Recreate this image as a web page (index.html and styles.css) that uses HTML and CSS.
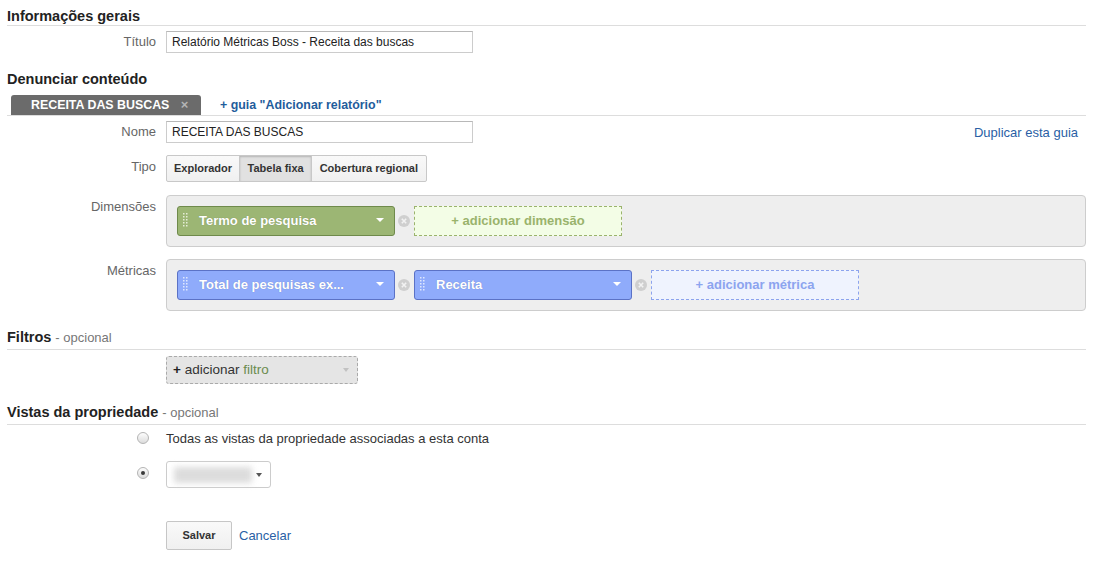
FILE: index.html
```html
<!DOCTYPE html>
<html lang="pt-BR">
<head>
    <meta charset="UTF-8">
    <meta name="viewport" content="width=device-width, initial-scale=1.0">
    <title>Editar relatório personalizado</title>
    <link rel="stylesheet" href="styles.css">
</head>
<body>
    <div class="page">
        <h2 class="sec-title">Informações gerais</h2>
        <div class="row row-title">
            <label class="row-label">Título</label>
            <div class="row-field">
                <input class="text-input" type="text" value="Relatório Métricas Boss - Receita das buscas">
            </div>
        </div>

        <h2 class="sec-title plain">Denunciar conteúdo</h2>
        <div class="tab-bar">
            <div class="tab">RECEITA DAS BUSCAS <span class="tab-close">×</span></div>
            <a class="tab-add" href="#">+ guia "Adicionar relatório"</a>
        </div>

        <div class="row row-name">
            <label class="row-label">Nome</label>
            <div class="row-field spread">
                <input class="text-input" type="text" value="RECEITA DAS BUSCAS">
                <a class="link dup-link" href="#">Duplicar esta guia</a>
            </div>
        </div>

        <div class="row row-type">
            <label class="row-label pad">Tipo</label>
            <div class="row-field">
                <div class="btn-group">
                    <span class="seg">Explorador</span>
                    <span class="seg selected">Tabela fixa</span>
                    <span class="seg">Cobertura regional</span>
                </div>
            </div>
        </div>

        <div class="row row-dims">
            <label class="row-label pad">Dimensões</label>
            <div class="pill-box">
                <div class="chip green">
                    <svg class="grip" width="5" height="14" viewBox="0 0 5 14"><g fill="#e4ecd6"><rect x="0" y="0" width="1.5" height="1.5"/><rect x="3" y="0" width="1.5" height="1.5"/><rect x="0" y="3" width="1.5" height="1.5"/><rect x="3" y="3" width="1.5" height="1.5"/><rect x="0" y="6" width="1.5" height="1.5"/><rect x="3" y="6" width="1.5" height="1.5"/><rect x="0" y="9" width="1.5" height="1.5"/><rect x="3" y="9" width="1.5" height="1.5"/><rect x="0" y="12" width="1.5" height="1.5"/><rect x="3" y="12" width="1.5" height="1.5"/></g></svg>
                    <span class="chip-text">Termo de pesquisa</span>
                    <span class="chip-arrow"></span>
                </div>
                <svg class="chip-remove" width="12" height="12" viewBox="0 0 12 12"><circle cx="6" cy="6" r="6" fill="#cfcfcf"/><path d="M3.8 3.8 L8.2 8.2 M8.2 3.8 L3.8 8.2" stroke="#f2f2f2" stroke-width="1.6"/></svg>
                <div class="chip-add green">+ adicionar dimensão</div>
            </div>
        </div>

        <div class="row row-metrics">
            <label class="row-label pad">Métricas</label>
            <div class="pill-box">
                <div class="chip blue">
                    <svg class="grip" width="5" height="14" viewBox="0 0 5 14"><g fill="#dfe7fd"><rect x="0" y="0" width="1.5" height="1.5"/><rect x="3" y="0" width="1.5" height="1.5"/><rect x="0" y="3" width="1.5" height="1.5"/><rect x="3" y="3" width="1.5" height="1.5"/><rect x="0" y="6" width="1.5" height="1.5"/><rect x="3" y="6" width="1.5" height="1.5"/><rect x="0" y="9" width="1.5" height="1.5"/><rect x="3" y="9" width="1.5" height="1.5"/><rect x="0" y="12" width="1.5" height="1.5"/><rect x="3" y="12" width="1.5" height="1.5"/></g></svg>
                    <span class="chip-text">Total de pesquisas ex...</span>
                    <span class="chip-arrow"></span>
                </div>
                <svg class="chip-remove" width="12" height="12" viewBox="0 0 12 12"><circle cx="6" cy="6" r="6" fill="#cfcfcf"/><path d="M3.8 3.8 L8.2 8.2 M8.2 3.8 L3.8 8.2" stroke="#f2f2f2" stroke-width="1.6"/></svg>
                <div class="chip blue">
                    <svg class="grip" width="5" height="14" viewBox="0 0 5 14"><g fill="#dfe7fd"><rect x="0" y="0" width="1.5" height="1.5"/><rect x="3" y="0" width="1.5" height="1.5"/><rect x="0" y="3" width="1.5" height="1.5"/><rect x="3" y="3" width="1.5" height="1.5"/><rect x="0" y="6" width="1.5" height="1.5"/><rect x="3" y="6" width="1.5" height="1.5"/><rect x="0" y="9" width="1.5" height="1.5"/><rect x="3" y="9" width="1.5" height="1.5"/><rect x="0" y="12" width="1.5" height="1.5"/><rect x="3" y="12" width="1.5" height="1.5"/></g></svg>
                    <span class="chip-text">Receita</span>
                    <span class="chip-arrow"></span>
                </div>
                <svg class="chip-remove" width="12" height="12" viewBox="0 0 12 12"><circle cx="6" cy="6" r="6" fill="#cfcfcf"/><path d="M3.8 3.8 L8.2 8.2 M8.2 3.8 L3.8 8.2" stroke="#f2f2f2" stroke-width="1.6"/></svg>
                <div class="chip-add blue">+ adicionar métrica</div>
            </div>
        </div>

        <h2 class="sec-title filters">Filtros <span class="optional">- opcional</span></h2>
        <div class="row row-filter">
            <span class="row-label"></span>
            <div class="row-field">
                <div class="filter-drop">
                    <span><b>+</b> adicionar <span class="filter-word">filtro</span></span>
                    <span class="caret light"></span>
                </div>
            </div>
        </div>

        <h2 class="sec-title views">Vistas da propriedade <span class="optional">- opcional</span></h2>
        <div class="row row-radio-all">
            <span class="radio"></span>
            <div class="row-field radio-text">Todas as vistas da propriedade associadas a esta conta</div>
        </div>
        <div class="row row-radio-one">
            <span class="radio checked"></span>
            <div class="row-field">
                <div class="view-select">
                    <span class="blur-val"></span>
                    <span class="caret"></span>
                </div>
            </div>
        </div>

        <div class="row row-actions">
            <span class="row-label"></span>
            <div class="row-field">
                <span class="btn">Salvar</span>
                <a class="link cancel" href="#">Cancelar</a>
            </div>
        </div>
    </div>
</body>
</html>
```

FILE: styles.css
```css
* {
    box-sizing: border-box;
}

body {
    margin: 0;
    font-family: "Liberation Sans", Arial, sans-serif;
    font-size: 13px;
    color: #333;
    background: #fff;
}

.page {
    padding: 0 10px 0 7px;
}

.sec-title {
    margin: 0;
    padding: 7px 0 0;
    font-size: 14.5px;
    font-weight: bold;
    line-height: 18px;
    color: #222;
    border-bottom: 1px solid #ddd;
}

.sec-title.plain {
    margin-top: 17px;
    padding: 0;
    border-bottom: none;
}

.sec-title.filters {
    margin-top: 17px;
    padding: 0 0 2px;
}

.sec-title.views {
    margin-top: 19px;
    padding: 0 0 2px;
}

.optional {
    font-size: 13px;
    font-weight: normal;
    color: #777;
}

.row {
    display: grid;
    grid-template-columns: 149px 1fr;
    column-gap: 10px;
}

.row-label {
    text-align: right;
    color: #666;
    line-height: 22px;
}

.row-label.pad {
    padding-top: 1px;
}

.row-field {
    display: flex;
    align-items: center;
}

.row-field.spread {
    justify-content: space-between;
}

.row-title { margin-top: 5px; }
.row-name { margin-top: 5px; }
.row-type { margin-top: 12px; }
.row-dims { margin-top: 13px; }
.row-metrics { margin-top: 12px; }
.row-filter { margin-top: 6px; }
.row-radio-all { margin-top: 5px; }
.row-radio-one { margin-top: 13px; }
.row-actions { margin-top: 33px; }

.text-input {
    width: 307px;
    height: 22px;
    margin: 0;
    padding: 0 5px;
    border: 1px solid #ccc;
    border-top-color: #b8b8b8;
    font-family: "Liberation Sans", Arial, sans-serif;
    font-size: 12px;
    color: #222;
    outline: none;
}

.link {
    color: #2a5fa5;
    text-decoration: none;
}

.dup-link {
    margin-right: 8px;
}

/* tabs */
.tab-bar {
    margin-top: 7px;
    padding-left: 4px;
    display: flex;
    align-items: flex-end;
    border-bottom: 1px solid #ddd;
}

.tab {
    width: 190px;
    height: 20px;
    line-height: 20px;
    padding-left: 20px;
    background: #6b6b6b;
    color: #fff;
    font-size: 12.4px;
    font-weight: bold;
    border-radius: 3px 3px 0 0;
}

.tab-close {
    margin-left: 8px;
    color: #b5b5b5;
    font-size: 13px;
}

.tab-add {
    margin-left: 19px;
    line-height: 20px;
    font-size: 12.4px;
    font-weight: bold;
    color: #1f5d9c;
    text-decoration: none;
}

/* button group */
.btn-group {
    display: flex;
}

.seg {
    height: 27px;
    line-height: 25px;
    padding: 0 7px;
    margin-left: -1px;
    border: 1px solid #c8c8c8;
    background: linear-gradient(#f9f9f9, #f0f0f0);
    font-size: 11px;
    font-weight: bold;
    color: #333;
}

.seg:first-child {
    margin-left: 0;
    border-radius: 2px 0 0 2px;
}

.seg.selected {
    padding: 0 7.5px;
    background: #e1e1e1;
    box-shadow: inset 0 1px 2px rgba(0, 0, 0, 0.2);
}

.seg:last-child {
    padding: 0 7.5px;
    border-radius: 0 2px 2px 0;
}

/* dimension / metric boxes */
.pill-box {
    display: flex;
    align-items: center;
    padding: 10px;
    background: #eee;
    border: 1px solid #cdcdcd;
    border-radius: 4px;
}

.chip {
    width: 218px;
    height: 30px;
    display: flex;
    align-items: center;
    padding: 0 10px 2px 5px;
    border: 1px solid;
    border-radius: 3px;
    color: #fff;
    font-size: 13px;
    font-weight: bold;
    text-shadow: 0 0 1px rgba(0, 0, 0, 0.25);
}

.chip.green {
    background: #9cb674;
    border-color: #6f8a4b;
}

.chip.blue {
    background: #8fabfb;
    border-color: #5b72c6;
}

.grip {
    flex: none;
}

.chip-text {
    margin-left: 11px;
    flex: 1;
    white-space: nowrap;
}

.chip-arrow {
    width: 0;
    height: 0;
    border-left: 4px solid transparent;
    border-right: 4px solid transparent;
    border-top: 4px solid #fff;
}

.chip-remove {
    flex: none;
    margin: 0 4px 0 3px;
}

.chip-add {
    width: 208px;
    height: 30px;
    line-height: 27px;
    text-align: center;
    border: 1px dashed;
    font-size: 13px;
    font-weight: bold;
}

.chip-add.green {
    background: #f3fde6;
    border-color: #9bb36d;
    color: #9ab36c;
}

.chip-add.blue {
    background: #eff3fe;
    border-color: #8ca3ee;
    color: #8ca4ef;
}

/* filter */
.filter-drop {
    width: 192px;
    height: 28px;
    display: flex;
    align-items: center;
    justify-content: space-between;
    padding: 0 8px 1px 6px;
    background: #e5e5e5;
    border: 1px dashed #aaa;
    border-radius: 3px;
    color: #333;
    font-size: 13.5px;
}

.filter-drop b {
    color: #222;
}

.filter-word {
    color: #6b8c4f;
}

.caret {
    width: 0;
    height: 0;
    border-left: 3.5px solid transparent;
    border-right: 3.5px solid transparent;
    border-top: 4px solid #555;
}

.caret.light {
    border-top-color: #c2c2c2;
}

/* property views */
.radio {
    justify-self: end;
    align-self: start;
    width: 12px;
    height: 12px;
    margin: 2px 7px 0 0;
    border: 1px solid #b4b4b4;
    border-radius: 50%;
    background: linear-gradient(#fdfdfd, #dcdcdc);
}

.row-radio-one .radio {
    margin-top: 6px;
    display: flex;
    align-items: center;
    justify-content: center;
}

.radio.checked::after {
    content: "";
    width: 4px;
    height: 4px;
    border-radius: 50%;
    background: #3a3a3a;
}

.radio-text {
    line-height: 18px;
    color: #333;
}

.view-select {
    width: 105px;
    height: 27px;
    display: flex;
    align-items: center;
    padding-right: 8px;
    border: 1px solid #ccc;
    border-radius: 3px;
    background: #fff;
}

.blur-val {
    width: 78px;
    height: 16px;
    margin-left: 7px;
    background: #dcdcdc;
    filter: blur(3px);
}

.view-select .caret {
    margin-left: auto;
}

/* actions */
.btn {
    width: 66px;
    height: 29px;
    line-height: 27px;
    text-align: center;
    border: 1px solid #c6c6c6;
    border-radius: 2px;
    background: linear-gradient(#f9f9f9, #f0f0f0);
    font-size: 11px;
    font-weight: bold;
    color: #333;
}

.cancel {
    margin-left: 7px;
    font-size: 13px;
}
```
